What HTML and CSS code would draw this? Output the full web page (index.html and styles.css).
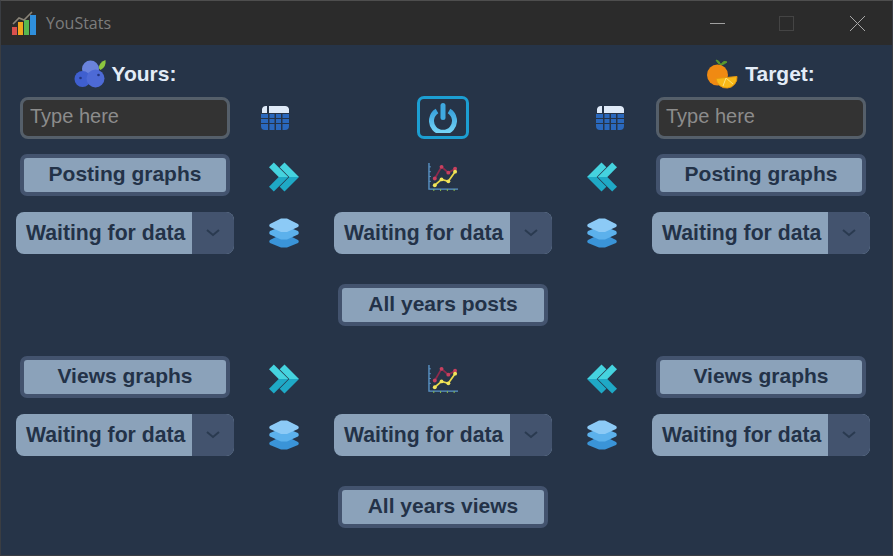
FILE: index.html
```html
<!DOCTYPE html>
<html lang="en">
<head>
    <meta charset="UTF-8">
    <title>YouStats</title>
    <link rel="stylesheet" href="styles.css">
</head>
<body>
    <svg class="sprites" width="0" height="0">
        <defs>
            <linearGradient id="powerGrad" x1="0" y1="0" x2="0" y2="1">
                <stop offset="0" stop-color="#3aa3dc"/>
                <stop offset="1" stop-color="#74d4f7"/>
            </linearGradient>
        </defs>
        <symbol id="calendar" viewBox="0 0 28 25">
            <path d="M1 8V4a4 4 0 0 1 4-3h1v7z" fill="#dfeaf8"/>
            <path d="M8 1h16a4 4 0 0 1 4 3v4H8z" fill="#dfeaf8"/>
            <path d="M0 9h28v4H0zM0 14h28v4H0zM0 19h28v2a4 4 0 0 1-4 4H4a4 4 0 0 1-4-4z" fill="#2a68bd"/>
            <path d="M7 9h1.500v16H7zM13.500 9H15v16h-1.500zM20 9h1.500v16H20z" fill="#263347"/>
        </symbol>
        <symbol id="forward" viewBox="0 0 31 30">
            <path d="M0 5l5-5 15 15H10z" fill="#45d3df"/>
            <path d="M0 25l5 5 15-15H10z" fill="#1fa9c6"/>
            <path d="M11 5l5-5 15 15H21z" fill="#45d3df"/>
            <path d="M11 25l5 5 15-15H21z" fill="#1fa9c6"/>
        </symbol>
        <symbol id="layers" viewBox="0 0 30 30">
            <path d="M1 22l10-5h8l10 5q1.500 1.500 0 3l-11 4.500h-6L1 25q-1.500-1.500 0-3z" fill="#3a94d8"/>
            <path d="M1 13l10-4h8l10 4q1.500 2 0 3.500l-11 5h-6l-11-5q-1.500-1.500 0-3.500z" fill="#5cb1ec"/>
            <path d="M1 6l11-5.500h6L29 6q1.500 1.500 0 3l-11 5h-6L1 9q-1.500-1.500 0-3z" fill="#8ccaf6"/>
        </symbol>
        <symbol id="chart" viewBox="0 0 31 31">
            <path d="M1 1v27h30" fill="none" stroke="#5a94c8" stroke-width="1.400"/>
            <path d="M1 5h2M1 10h2M1 15h2M1 20h2" stroke="#5a94c8"/>
            <path d="M6 30v-2M13 30v-2M20 30v-2M27 30v-2" stroke="#8cc04a"/>
            <path d="M7 17l7-12 7 6 7-4" fill="none" stroke="#8e2a4c" stroke-width="1.800"/>
            <path d="M7 24l7-6 7 2 7-10" fill="none" stroke="#e8d84a" stroke-width="1.800"/>
            <g fill="#c8405f">
                <circle cx="7" cy="17" r="2"/><circle cx="14" cy="5" r="2"/><circle cx="21" cy="11" r="2"/><circle cx="28" cy="7" r="2"/>
            </g>
            <g fill="#f2e45a">
                <circle cx="7" cy="24" r="2"/><circle cx="14" cy="18" r="2"/><circle cx="21" cy="20" r="2"/><circle cx="28" cy="10" r="2"/>
            </g>
        </symbol>
        <symbol id="arrow" viewBox="0 0 14 8">
            <path d="M1 1l6 5 6-5" fill="none" stroke="#2a3a50" stroke-width="2"/>
        </symbol>
    </svg>

    <header class="title-bar">
        <svg class="app-logo" viewBox="0 0 24 24">
            <path d="M0 16h5v8H0z" fill="#d9504e"/>
            <path d="M6 11h5v13H6z" fill="#f2a51f"/>
            <path d="M12 9h5v15h-5z" fill="#58b84f"/>
            <path d="M18 4h6v20h-6z" fill="#2f8fdc"/>
            <path d="M1 13l6-6 5 2 8-8" fill="none" stroke="#8a8478" stroke-width="1.600"/>
        </svg>
        <span class="app-name">YouStats</span>
        <div class="window-buttons">
            <span class="win-min"></span>
            <span class="win-max"></span>
            <svg class="win-close" viewBox="0 0 15 15"><path d="M0 0l15 15M15 0L0 15" stroke="#a8a8a8"/></svg>
        </div>
    </header>

    <main class="content">
        <div class="row row-head">
            <div class="user-title">
                <svg class="fruit" viewBox="0 0 32 28">
                    <path d="M24 8q1-6 7-8 1 7-5 10z" fill="#8cc63f"/>
                    <circle cx="16" cy="9" r="8.500" fill="#6a83dc"/>
                    <circle cx="8" cy="19" r="8" fill="#3f5fcf"/>
                    <circle cx="21" cy="18.500" r="9" fill="#4d6ad6"/>
                    <circle cx="6" cy="18" r="1.300" fill="#22357f"/>
                    <circle cx="24" cy="15" r="1.300" fill="#22357f"/>
                </svg>
                Yours:
            </div>
            <div></div>
            <div></div>
            <div></div>
            <div class="user-title">
                <svg class="fruit fruit-orange" viewBox="0 0 31 31">
                    <path d="M14 6Q12 1 9 1q1 3 5 5 4-1 6-3-4-2-6 3z" fill="#5b9a2c" stroke="#5b9a2c"/>
                    <circle cx="10.500" cy="16" r="10.500" fill="#f08a12"/>
                    <path d="M9 19.500a10.500 10.500 0 0 0 21-2z" fill="#f8b917" stroke="#e8960f"/>
                    <path d="M19 19l-3 8M19 19l7 6" stroke="#fde27a"/>
                </svg>
                Target:
            </div>
        </div>

        <div class="row">
            <input class="user-input" type="text" placeholder="Type here">
            <svg class="icon-calendar calendar-left"><use href="#calendar"/></svg>
            <button class="power-btn">
                <svg class="power-icon" viewBox="0 0 28 30">
                    <path d="M8 8a11.500 11.500 0 1 0 12 0" fill="none" stroke="url(#powerGrad)" stroke-width="5"/>
                    <path d="M14 2.500v12" stroke="#3fa9e0" stroke-width="5" stroke-linecap="round"/>
                </svg>
            </button>
            <svg class="icon-calendar calendar-right"><use href="#calendar"/></svg>
            <input class="user-input" type="text" placeholder="Type here">
        </div>

        <div class="row">
            <button class="action-btn">Posting graphs</button>
            <svg class="icon icon-low"><use href="#forward"/></svg>
            <svg class="icon icon-low"><use href="#chart"/></svg>
            <svg class="icon icon-low flip"><use href="#forward"/></svg>
            <button class="action-btn">Posting graphs</button>
        </div>

        <div class="row">
            <div class="combo"><span class="combo-text">Waiting for data</span><span class="combo-arrow"><svg><use href="#arrow"/></svg></span></div>
            <svg class="icon"><use href="#layers"/></svg>
            <div class="combo"><span class="combo-text">Waiting for data</span><span class="combo-arrow"><svg><use href="#arrow"/></svg></span></div>
            <svg class="icon"><use href="#layers"/></svg>
            <div class="combo"><span class="combo-text">Waiting for data</span><span class="combo-arrow"><svg><use href="#arrow"/></svg></span></div>
        </div>

        <div class="row row-all">
            <button class="action-btn all-btn">All years posts</button>
        </div>

        <div class="row row-all">
            <button class="action-btn">Views graphs</button>
            <svg class="icon icon-low"><use href="#forward"/></svg>
            <svg class="icon icon-low"><use href="#chart"/></svg>
            <svg class="icon icon-low flip"><use href="#forward"/></svg>
            <button class="action-btn">Views graphs</button>
        </div>

        <div class="row">
            <div class="combo"><span class="combo-text">Waiting for data</span><span class="combo-arrow"><svg><use href="#arrow"/></svg></span></div>
            <svg class="icon"><use href="#layers"/></svg>
            <div class="combo"><span class="combo-text">Waiting for data</span><span class="combo-arrow"><svg><use href="#arrow"/></svg></span></div>
            <svg class="icon"><use href="#layers"/></svg>
            <div class="combo"><span class="combo-text">Waiting for data</span><span class="combo-arrow"><svg><use href="#arrow"/></svg></span></div>
        </div>

        <div class="row row-all">
            <button class="action-btn all-btn">All years views</button>
        </div>
    </main>
</body>
</html>
```

FILE: styles.css
```css
* {
    box-sizing: border-box;
}

body {
    width: 893px;
    height: 556px;
    margin: 0;
    border: 1px solid #3a3d42;
    border-top-color: #4e4e4e;
    background-color: #263448;
    font-family: "Liberation Sans", Arial, sans-serif;
    overflow: hidden;
}

.sprites {
    position: absolute;
}

.title-bar {
    display: flex;
    align-items: center;
    height: 44px;
    padding-left: 11px;
    background-color: #2b2b2b;
}

.app-logo {
    width: 24px;
    height: 24px;
}

.app-name {
    margin-left: 10px;
    font-family: "Open Sans", sans-serif;
    font-size: 16px;
    color: #7d7d7d;
}

.window-buttons {
    display: flex;
    align-items: center;
    margin-left: auto;
    margin-right: 27px;
    gap: 54px;
}

.win-min {
    width: 15px;
    height: 1px;
    background-color: #a0a0a0;
}

.win-max {
    width: 15px;
    height: 15px;
    border: 1px solid #444;
}

.win-close {
    width: 15px;
    height: 15px;
    margin-left: 2px;
}

.content {
    display: flex;
    flex-direction: column;
    padding-left: 15px;
}

.row {
    display: grid;
    grid-template-columns: 218px 100px 218px 100px 218px;
    justify-items: center;
    align-items: center;
    height: 42px;
    margin-top: 16px;
}

.row-head {
    height: 36px;
    margin-top: 11px;
}

.row-head + .row {
    margin-top: 4px;
}

.row-all {
    margin-top: 30px;
}

.user-title {
    display: flex;
    align-items: center;
    gap: 5px;
    font-size: 21px;
    font-weight: bold;
    color: #e3ecf7;
}

.fruit {
    width: 33px;
    height: 28px;
}

.fruit-orange {
    width: 31px;
    height: 31px;
    margin-right: 2px;
}

.user-input {
    width: 210px;
    height: 42px;
    padding: 0 7px 2px;
    background-color: #333333;
    border: 3px solid #555f6a;
    border-radius: 8px;
    font-family: inherit;
    font-size: 20px;
    color: #ddd;
}

.user-input::placeholder {
    color: #8c8c8c;
    opacity: 1;
}

.icon {
    width: 30px;
    height: 30px;
}

.icon-low {
    margin-top: 4px;
}

.icon-calendar {
    width: 28px;
    height: 25px;
}

.calendar-left {
    margin-right: 18px;
}

.calendar-right {
    margin-left: 16px;
}

.flip {
    transform: scaleX(-1);
}

.power-btn {
    display: flex;
    align-items: center;
    justify-content: center;
    width: 52px;
    height: 43px;
    padding: 0;
    background: none;
    border: 3px solid #1c9ed2;
    border-radius: 7px;
}

.power-icon {
    width: 28px;
    height: 30px;
}

.action-btn {
    width: 210px;
    height: 42px;
    padding: 0 0 2px;
    background-color: #8ba2ba;
    border: 4px solid #43536e;
    border-radius: 7px;
    font-family: inherit;
    font-size: 21px;
    font-weight: bold;
    color: #233248;
}

.all-btn {
    grid-column: 3;
}

.combo {
    display: flex;
    width: 218px;
    height: 42px;
    border-radius: 8px;
    overflow: hidden;
    background-color: #8ba2ba;
}

.combo-text {
    flex: 1;
    padding-left: 10px;
    font-size: 21.2px;
    font-weight: bold;
    line-height: 42px;
    color: #233248;
}

.combo-arrow {
    display: flex;
    align-items: center;
    justify-content: center;
    width: 42px;
    background-color: #43536e;
}

.combo-arrow svg {
    width: 14px;
    height: 8px;
}
```
